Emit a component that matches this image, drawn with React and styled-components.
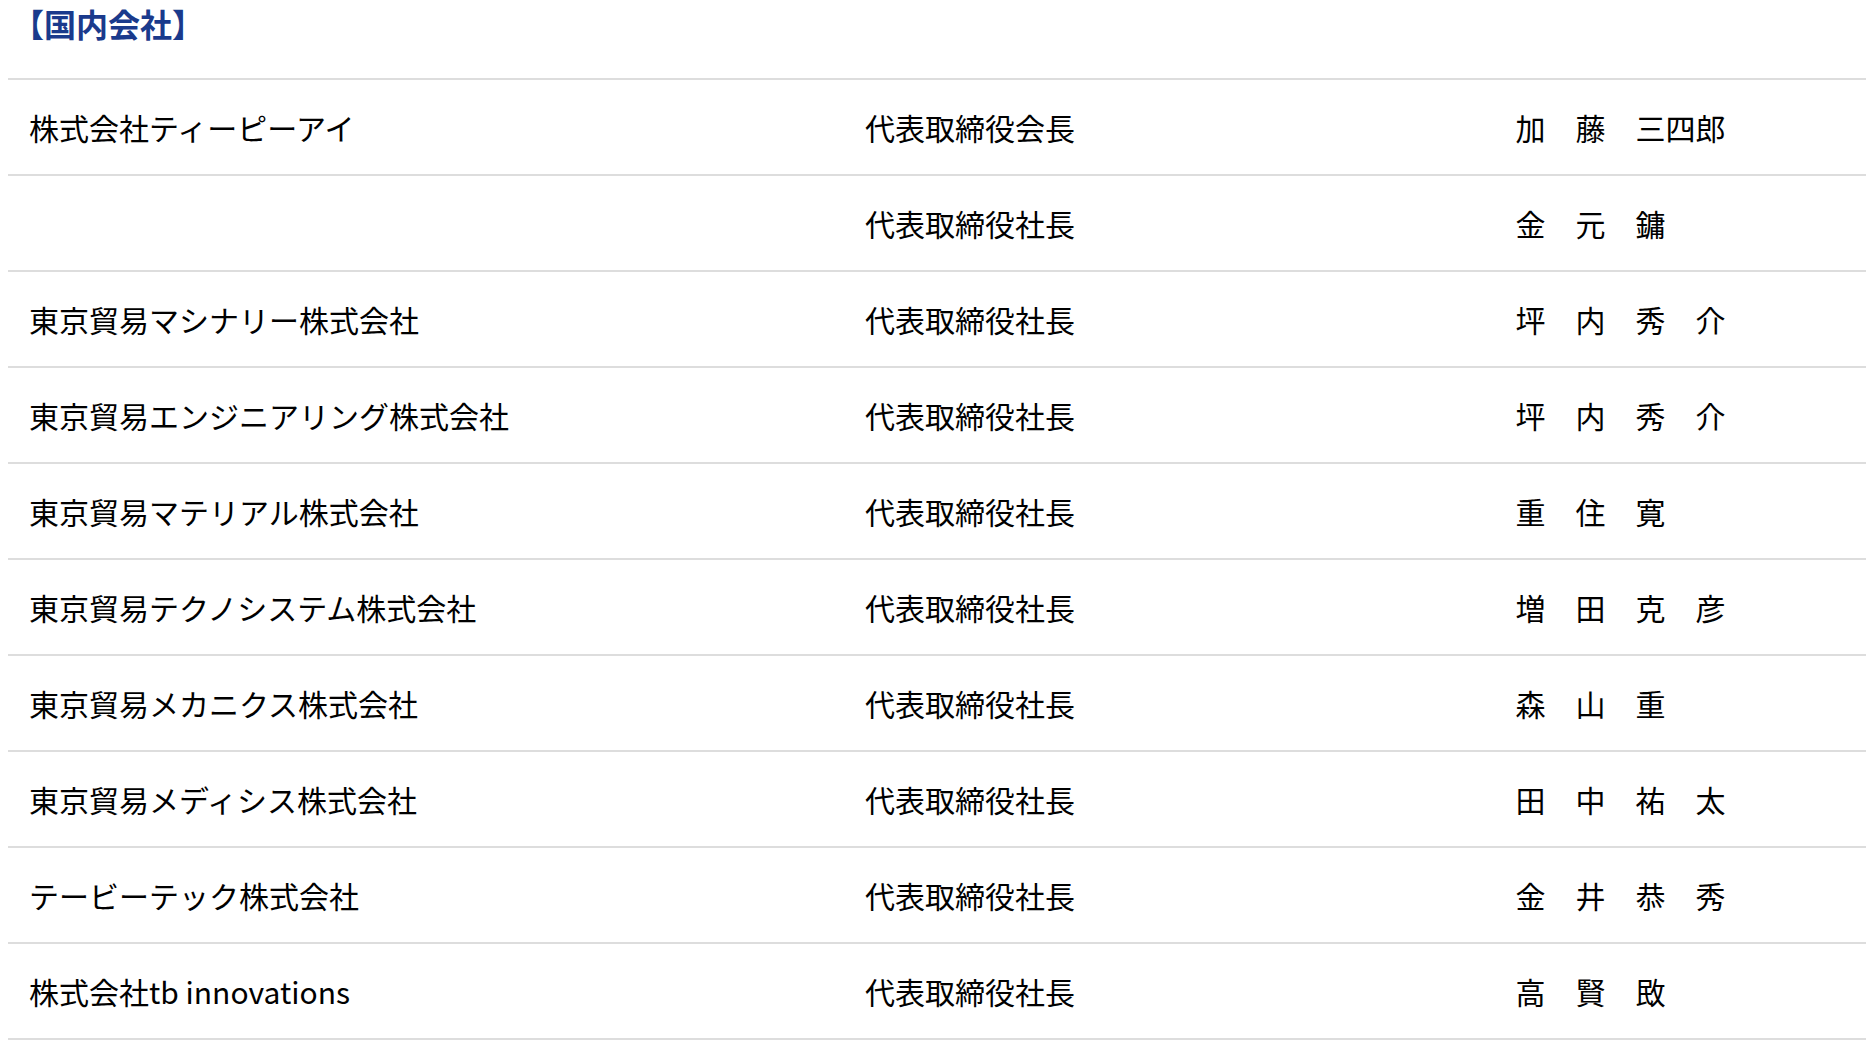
import React from "react";
import styled, { createGlobalStyle } from "styled-components";

const GlobalStyle = createGlobalStyle`
  html, body {
    margin: 0;
    padding: 0;
    background: #ffffff;
  }
  body {
    font-family: "Noto Sans CJK JP", "Noto Sans", sans-serif;
    color: #000000;
  }
`;

const Page = styled.div`
  padding: 0 8px;
`;

const Heading = styled.h2`
  margin: 0;
  padding: 0 0 0 4px;
  font-size: 32px;
  line-height: 46px;
  font-weight: 700;
  color: #1a3a8c;
  font-family: "Noto Sans CJK JP", sans-serif;
`;

const Table = styled.div`
  margin-top: 32px;
  border-top: 2px solid #dddddd;
`;

const Row = styled.div`
  display: grid;
  grid-template-columns: 45% 35% 20%;
  height: 94px;
  align-items: center;
  border-bottom: 2px solid #dddddd;
`;

const Cell = styled.div`
  padding-left: 21px;
  font-size: 30px;
  line-height: 1.4;
  white-space: pre;
  font-family: "Noto Sans CJK JP", sans-serif;
`;

const rows = [
  ["株式会社ティーピーアイ", "代表取締役会長", "加　藤　三四郎"],
  ["", "代表取締役社長", "金　元　鏞"],
  ["東京貿易マシナリー株式会社", "代表取締役社長", "坪　内　秀　介"],
  ["東京貿易エンジニアリング株式会社", "代表取締役社長", "坪　内　秀　介"],
  ["東京貿易マテリアル株式会社", "代表取締役社長", "重　住　寛"],
  ["東京貿易テクノシステム株式会社", "代表取締役社長", "増　田　克　彦"],
  ["東京貿易メカニクス株式会社", "代表取締役社長", "森　山　重"],
  ["東京貿易メディシス株式会社", "代表取締役社長", "田　中　祐　太"],
  ["テービーテック株式会社", "代表取締役社長", "金　井　恭　秀"],
  ["株式会社tb innovations", "代表取締役社長", "高　賢　敃"],
];

export default function App() {
  return (
    <>
      <GlobalStyle />
      <Page>
        <Heading>【国内会社】</Heading>
        <Table>
          {rows.map((r, i) => (
            <Row key={i}>
              <Cell>{r[0]}</Cell>
              <Cell>{r[1]}</Cell>
              <Cell>{r[2]}</Cell>
            </Row>
          ))}
        </Table>
      </Page>
    </>
  );
}
